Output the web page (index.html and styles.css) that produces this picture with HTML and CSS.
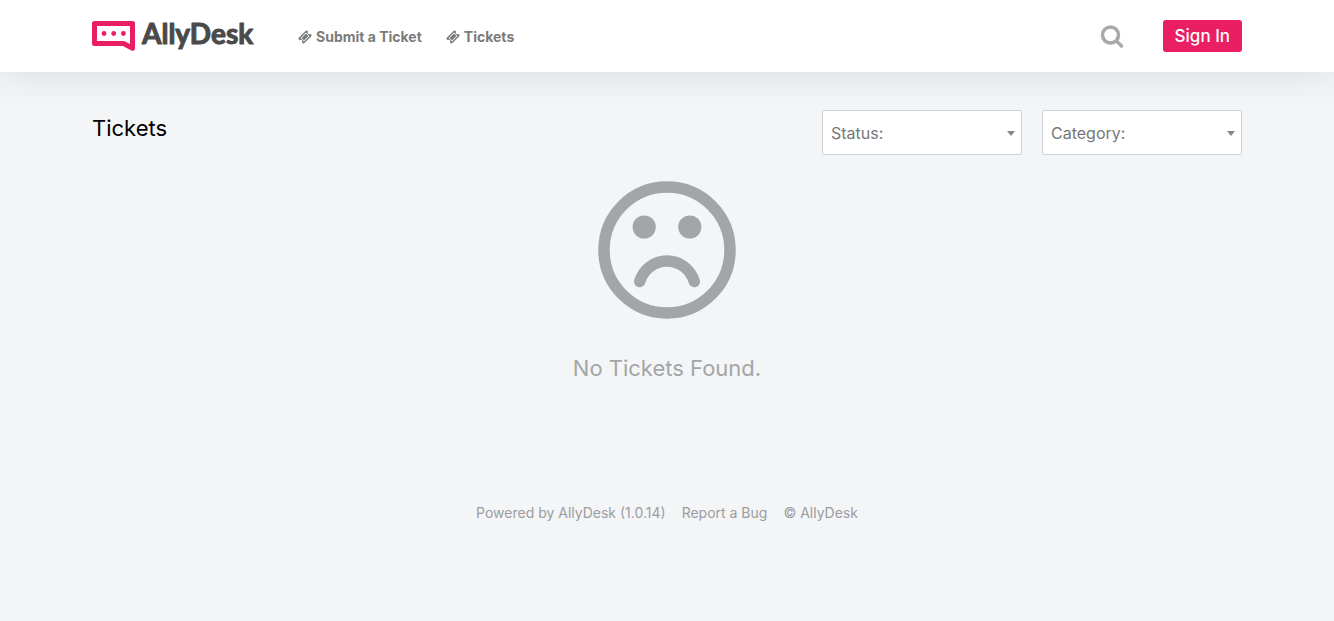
FILE: index.html
```html
<!DOCTYPE html>
<html lang="en">
<head>
<meta charset="utf-8">
<meta name="viewport" content="width=device-width, initial-scale=1">
<title>Tickets - AllyDesk</title>
<link rel="stylesheet" href="styles.css">
</head>
<body>
<svg class="sprite" aria-hidden="true">
  <symbol id="ticket" viewBox="0 0 1792 1792"><path d="M1024 452l316 316-572 572-316-316zm-211 979l618-618q19-19 19-45t-19-45l-362-362q-18-18-45-18t-45 18l-618 618q-19 19-19 45t19 45l362 362q18 18 45 18t45-18zm889-637l-907 908q-37 37-90.500 37t-90.500-37l-126-125q56-56 56-136t-56-136-136-56-136 56l-125-126q-37-37-37-90.500t37-90.500l907-906q37-37 90.500-37t90.500 37l125 125q-56 56-56 136t56 136 136 56 136-56l126 125q37 37 37 90.500t-37 90.500z"/></symbol>
</svg>
<header class="header">
  <div class="container header-row">
    <a class="brand" href="#" aria-label="AllyDesk">
      <svg class="brand-logo" width="168" height="32" viewBox="0 0 168 32">
        <path d="M2.500 3.500H40.500V28.200L31.500 23.500H2.500Z" fill="none" stroke="#e91e63" stroke-width="5" stroke-linejoin="round"/>
        <g fill="#e91e63"><circle cx="12" cy="13.500" r="2.400"/><circle cx="21.700" cy="13.500" r="2.400"/><circle cx="31.400" cy="13.500" r="2.400"/></g>
        <text class="brand-name" x="50" y="24">AllyDesk</text>
      </svg>
    </a>
    <nav class="nav">
      <a class="nav-link" href="#"><svg class="nav-icon"><use href="#ticket"/></svg>Submit a Ticket</a>
      <a class="nav-link" href="#"><svg class="nav-icon"><use href="#ticket"/></svg>Tickets</a>
    </nav>
    <button class="search" type="button" aria-label="Search">
      <svg width="24" height="24" viewBox="0 0 24 24" fill="none" stroke="#a9a9a9" stroke-width="3.500" stroke-linecap="round"><circle cx="10.500" cy="10" r="8"/><path d="M16.500 16L21.500 21"/></svg>
    </button>
    <a class="sign-in" href="#">Sign In</a>
  </div>
</header>
<main class="container main">
  <div class="toolbar">
    <h1 class="title">Tickets</h1>
    <div class="filters">
      <div class="filter"><select class="filter-select" aria-label="Status"><option>Status:</option></select></div>
      <div class="filter"><select class="filter-select" aria-label="Category"><option>Category:</option></select></div>
    </div>
  </div>
  <section class="empty">
    <svg width="138" height="138" viewBox="0 0 138 138" fill="none" stroke="#a4a5a6" aria-hidden="true">
      <circle cx="69" cy="69" r="63" stroke-width="11.500"/>
      <g fill="#a4a5a6" stroke="none"><circle cx="46.200" cy="46" r="11.600"/><circle cx="91.800" cy="46" r="11.600"/></g>
      <path d="M41.700 100.500C45.500 88.500 56 80 69 80S92.500 88.500 96.300 100.500" stroke-width="11.500" stroke-linecap="round"/>
    </svg>
    <p class="empty-text">No Tickets Found.</p>
  </section>
</main>
<footer class="footer">
  <a class="footer-link" href="#">Powered by AllyDesk (1.0.14)</a>
  <a class="footer-link" href="#">Report a Bug</a>
  <span>© AllyDesk</span>
</footer>
</body>
</html>
```
FILE: styles.css
```css
* { box-sizing: border-box; }
body {
  margin: 0;
  background: #f3f5f7;
  color: #000;
  font-family: Inter, "Liberation Sans", sans-serif;
  font-size: 16px;
}
a { color: inherit; text-decoration: none; }
.sprite { display: none; }
.container {
  width: 100%;
  max-width: 1182px;
  margin: 0 auto;
  padding: 0 16px;
}
.header {
  background: #fff;
  box-shadow: 0 0 40px rgba(50, 50, 80, 0.14);
}
.header-row {
  display: flex;
  align-items: center;
  height: 72px;
}
.brand-logo { display: block; overflow: visible; }
.brand-name {
  font: 700 28px Lato, sans-serif;
  fill: #4a4a4a;
  stroke: #4a4a4a;
  stroke-width: 1px;
  stroke-linejoin: round;
}
.nav {
  display: flex;
  gap: 24px;
  margin: 0 auto 0 38px;
  padding-top: 2px;
  color: #7b7b7b;
  font-size: 14px;
  font-weight: 700;
  line-height: 20px;
}
.nav-link { display: flex; align-items: center; gap: 4px; }
.nav-icon { width: 14px; height: 14px; fill: currentColor; }
.search {
  display: flex;
  margin-right: 39px;
  padding: 2px 0 0;
  border: 0;
  background: none;
}
.sign-in {
  padding: 0 12px;
  border-radius: 3px;
  background: #e91e63;
  color: #fff;
  font-size: 17px;
  font-weight: 500;
  line-height: 32px;
}
.toolbar {
  display: flex;
  justify-content: space-between;
  padding-top: 38px;
}
.title {
  margin: 0;
  font-size: 22px;
  font-weight: 400;
  line-height: 36px;
}
.filters { display: flex; gap: 20px; }
.filter { position: relative; width: 200px; }
.filter::after {
  content: "";
  position: absolute;
  top: 21px;
  right: 7px;
  border: 4px solid transparent;
  border-top: 5px solid #868686;
  border-bottom: 0;
  pointer-events: none;
}
.filter-select {
  display: block;
  width: 100%;
  height: 45px;
  padding: 0 8px;
  border: 1px solid #cdd1d8;
  border-radius: 2px;
  background: #fff;
  color: #777;
  font: inherit;
  appearance: none;
}
.empty {
  display: flex;
  flex-direction: column;
  align-items: center;
  padding-top: 26px;
}
.empty-text {
  margin: 32px 0 0;
  color: #a4a5a6;
  font-size: 22px;
  line-height: 34px;
}
.footer {
  display: flex;
  flex-wrap: wrap;
  justify-content: center;
  gap: 16px;
  padding: 118px 16px 40px;
  color: #9c9d9f;
  font-size: 14px;
  line-height: 20px;
}
```
